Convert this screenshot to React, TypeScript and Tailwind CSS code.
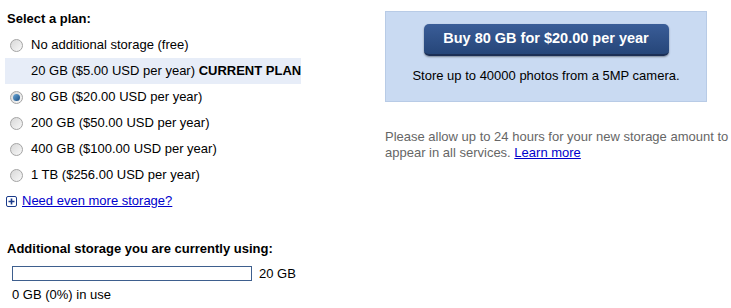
import React from "react";

const plans = [
  { label: "No additional storage (free)", state: "off" },
  { label: "20 GB ($5.00 USD per year)", state: "current" },
  { label: "80 GB ($20.00 USD per year)", state: "on" },
  { label: "200 GB ($50.00 USD per year)", state: "off" },
  { label: "400 GB ($100.00 USD per year)", state: "off" },
  { label: "1 TB ($256.00 USD per year)", state: "off" },
];

function Radio({ checked }: { checked: boolean }) {
  return (
    <span className="w-[13px] h-[13px] rounded-full border border-[#a4a4a4] bg-gradient-to-br from-[#d8d8d8] to-[#f8f8f8] flex items-center justify-center shrink-0">
      {checked && <span className="w-[7px] h-[7px] rounded-full bg-gradient-to-br from-[#6aa8d8] to-[#1b4f84]" />}
    </span>
  );
}

export default function App() {
  return (
    <div className="w-[731px] h-[308px] bg-white text-[13px] text-[#000] font-['Liberation_Sans',Arial,sans-serif] flex overflow-hidden">
      <div className="w-[385px] shrink-0 pl-[7px] pt-[11px] flex flex-col">
        <div className="font-bold leading-[16px]">Select a plan:</div>
        <div className="flex flex-col mt-[5px] -ml-[2px]">
          {plans.map((p) => (
            <div
              key={p.label}
              className={`h-[26px] w-[296px] flex items-center gap-[8px] pl-[5px] whitespace-nowrap ${p.state === "current" ? "bg-[#e7edf8]" : ""}`}
            >
              {p.state === "current" ? <span className="w-[13px] shrink-0" /> : <Radio checked={p.state === "on"} />}
              <span>
                {p.label}
                {p.state === "current" && <b> CURRENT PLAN</b>}
              </span>
            </div>
          ))}
        </div>
        <div className="flex items-center gap-[5px] mt-[5px] -ml-[1px]">
          <span className="w-[11px] h-[11px] border border-[#1a3a8a] rounded-[2px] flex items-center justify-center bg-white">
            <svg width="7" height="7" viewBox="0 0 7 7"><path d="M3.5 0.5v6M0.5 3.5h6" stroke="#1a3a8a" strokeWidth="1.6" /></svg>
          </span>
          <a href="#" className="text-[#0000cc] underline leading-[16px]">Need even more storage?</a>
        </div>
        <div className="font-bold mt-[32px] leading-[16px]">Additional storage you are currently using:</div>
        <div className="flex items-center gap-[7px] mt-[7px] pl-[5px]">
          <div className="w-[240px] h-[15px] border border-[#3e5f8e] bg-white" />
          <span>20 GB</span>
        </div>
        <div className="pl-[5px] mt-[3px] leading-[16px]">0 GB (0%) in use</div>
      </div>
      <div className="pt-[11px] flex flex-col w-[346px]">
        <div className="w-[322px] h-[91px] bg-[#c9daf2] border border-[#b8cbe6] flex flex-col items-center pt-[12px]">
          <button className="w-[245px] h-[32px] rounded-[5px] bg-gradient-to-b from-[#3a5d98] to-[#264679] border-b-[2px] border-[#1c2f55] text-white font-bold text-[14.5px] shadow-[0_1px_2px_rgba(0,0,0,0.4)]">
            Buy 80 GB for $20.00 per year
          </button>
          <div className="mt-[12px] text-[13px] leading-[16px]">Store up to 40000 photos from a 5MP camera.</div>
        </div>
        <div className="mt-[27px] text-[#666] leading-[16px]">
          Please allow up to 24 hours for your new storage amount to appear in all services.{" "}
          <a href="#" className="text-[#0000cc] underline">Learn more</a>
        </div>
      </div>
    </div>
  );
}
